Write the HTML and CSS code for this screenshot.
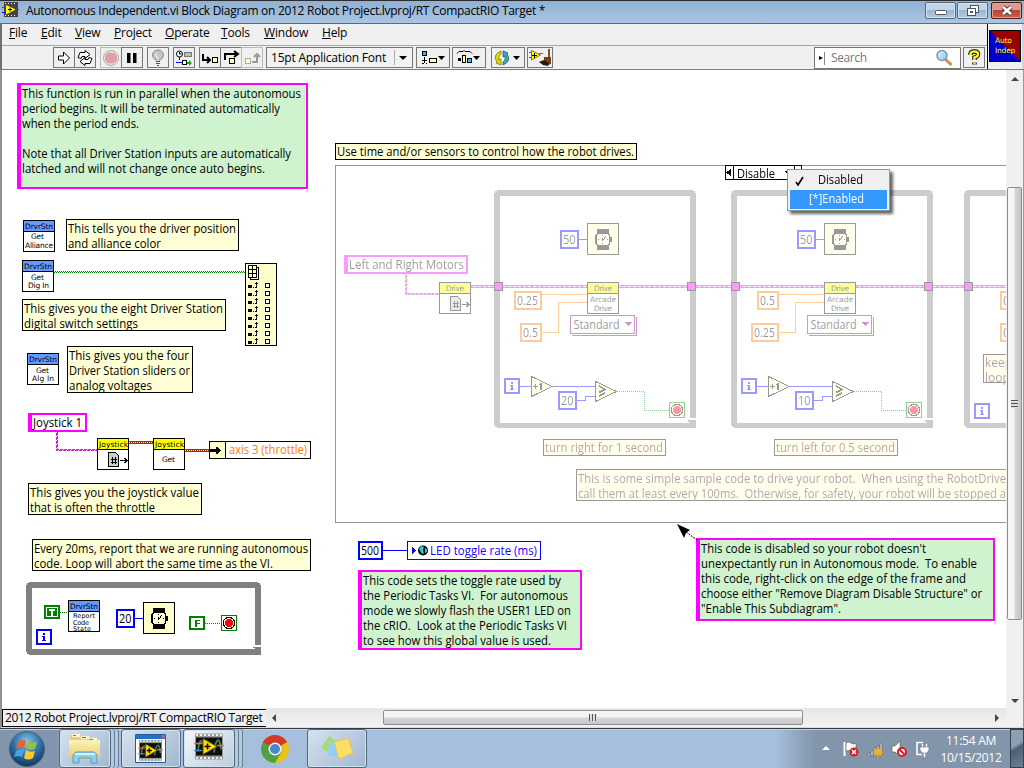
FILE: index.html
```html
<!DOCTYPE html>
<html lang="en">
<head>
<meta charset="utf-8">
<title>Autonomous Independent.vi Block Diagram</title>
<link rel="stylesheet" href="styles.css">
</head>
<body>
<svg class="defs" width="0" height="0">
  <defs>
    <pattern id="green-wire" width="2" height="2" patternUnits="userSpaceOnUse"><path d="M0 0h1v1h-1zM1 1h1v1h-1z" fill="#008000"/></pattern>
    <pattern id="pink-wire" width="4" height="4" patternUnits="userSpaceOnUse"><rect width="4" height="4" fill="#f0f"/><path d="M0 0h1v1h-1zM2 2h1v1h-1zM3 1h1v1h-1zM1 3h1v1h-1z" fill="#fff"/></pattern>
    <linearGradient id="lens" x2="1" y2="1"><stop stop-color="#e8f8ff"/><stop offset="1" stop-color="#7fc4ec"/></linearGradient>
    <radialGradient id="orb" cx=".5" cy=".3" r=".75"><stop stop-color="#8fc6e4"/><stop offset=".5" stop-color="#2f72a8"/><stop offset="1" stop-color="#0c2c50"/></radialGradient>
    <linearGradient id="folder" x2="0" y2="1"><stop stop-color="#fdf3b8"/><stop offset="1" stop-color="#e9c766"/></linearGradient>
    <symbol id="watch" viewBox="0 0 32 32"><rect x=".5" y=".5" width="31" height="31" fill="#ffc" stroke="#000"/><path d="M10 6h12v5h-12zM10 22h12v5h-12z"/><path d="M10 10h12v1h1v3h2v5h-2v3h-1v1h-12v-1h-1v-1h-1v-9h1v-1h1z"/><path d="M11 11h10v1h1v9h-1v1h-10v-1h-1v-9h1z" fill="#ffffd8"/><path d="M15 12h1v1h-1zM11 16h1v1h-1zM20 16h1v1h-1zM15 20h1v1h-1zM18 13h1v1h-1zM17 14h1v2h-1zM15 15h1v3h-1zM16 16h1v1h-1z"/></symbol>
    <symbol id="stop" viewBox="0 0 16 16"><rect x=".5" y=".5" width="15" height="15" fill="#ffffe0" stroke="#008000"/><circle cx="8" cy="8" r="5.700" fill="#fff" stroke="#000"/><circle cx="8" cy="8" r="4.300" fill="#f00"/></symbol>
    <symbol id="iter" viewBox="0 0 16 16"><rect x="1" y="1" width="14" height="14" fill="#fff" stroke="#00f" stroke-width="2"/><path d="M7 4h2v2h-2zM6 7h3v5h-2v-4h-1zM6 11h4v1h-4z" fill="#00f"/></symbol>
    <symbol id="page-ref" viewBox="0 0 20 16"><path d="M.5.5h7l3 3v11h-10z" fill="#ccc" stroke="#000"/><path d="M3 7.500h6M2.500 10.500h6M5 5.500l-1 7M8 5.500l-1 7" fill="none" stroke="#000"/><path d="M12 8.500h7M16.500 6l2.500 2.500l-2.500 2.500" fill="none" stroke="#000"/></symbol>
    <symbol id="loop" viewBox="0 0 203 239"><path d="M3 0h196v1h2v2h1v225h-6v-222h-190v227h190v-1h-2v-2h8v8h-199v-1h-2v-2h-1v-232h1v-2h2z" fill="#808080"/></symbol>
    <symbol id="lv" viewBox="0 0 30 28"><rect x="1" y="1" width="28" height="26" fill="#999"/><path d="M2 2.500h26M2 25.500h26" stroke="#eee" stroke-width="2" stroke-dasharray="2 2"/><rect x="2" y="5" width="26" height="18" fill="#0c0f0c"/><path d="M4 19c1-14 5-14 7 0M20 20c2-16 6-16 7-3" fill="none" stroke="#3f8a58" stroke-width="1.800"/><path d="M9 6l14 8l-14 8z" fill="#ffdf00" stroke="#5c4a00"/><path d="M10.500 14h6M13.500 11v6" stroke="#000" stroke-width="1.600"/><path d="M0 11h8M23 13h7" stroke="#e66" stroke-width="1.500"/><path d="M0 18h8" stroke="#48c" stroke-width="1.500"/></symbol>
    <g id="half">
      <path d="M579 239.500h8" stroke="#00f"/><rect x="561" y="231" width="17" height="17" fill="#fff" stroke="#00f" stroke-width="2"/><text class="t" x="563" y="244" textLength="12.500" lengthAdjust="spacingAndGlyphs">50</text>
      <use href="#watch" x="587" y="223" width="32" height="32"/>
      <path d="M542 294.500h45M542 332.500h16.500v-30h29" stroke="#ff8000" fill="none"/>
      <rect x="587.500" y="282.500" width="31" height="31" fill="#fff" stroke="#000"/><path d="M588 283h30v10h-30z" fill="#ff0"/><path d="M587 293.500h32" stroke="#000"/>
      <text class="p" x="594" y="291" textLength="18">Drive</text><text class="p" x="590" y="302" textLength="26">Arcade</text><text class="p" x="594" y="311" textLength="18">Drive</text>
      <path d="M572.500 334.500v1h64v-18h-1" fill="none" stroke="#800080"/><rect x="570.500" y="315.500" width="64" height="18" fill="#fff" stroke="#800080"/><text class="t" x="573.500" y="329" textLength="46" lengthAdjust="spacingAndGlyphs">Standard</text><path d="M625 322h7l-3.500 4z" fill="#800080"/>
      <path d="M520 386.500h11M552 386.500h43M577 400.500h8.500v-4h10" fill="none" stroke="#00f"/>
      <use href="#iter" x="504" y="378" width="16" height="16"/>
      <path d="M531.500 376.500v20l20.500-10z" fill="#ffc" stroke="#000"/><path d="M533 386h5v1h-5zM535 384h1v5h-1zM539 384h1v-1h2v7h-2v-5h-1z"/>
      <path d="M595.500 381.500v20l21-10z" fill="#ffc" stroke="#000"/><path d="M599 386l6 3.500l-6 3M599 396l6-3" fill="none" stroke="#000" stroke-width="1.500"/>
      <rect x="559" y="392" width="17" height="17" fill="#fff" stroke="#00f" stroke-width="2"/>
      <path d="M617 391.500h27.500v19h24.500" fill="none" stroke="#008000" stroke-dasharray="1 1"/>
      <use href="#stop" x="669" y="402" width="16" height="16"/>
    </g>
  </defs>
</svg>

<header class="titlebar">
  <svg class="app-icon" width="17" height="15" viewBox="0 0 17 15"><path d="M2 0h14v15h-14z" fill="#444"/><path d="M3 1h1v1h-1zM6 1h1v1h-1zM9 1h1v1h-1zM12 1h1v1h-1zM3 13h1v1h-1zM6 13h1v1h-1zM9 13h1v1h-1zM12 13h1v1h-1z" fill="#fff"/><path d="M4 3l10 4.500l-10 5z" fill="#ff0"/><path d="M6 7.500h4M8 5.500v4" stroke="#000"/><path d="M0 5.500h4M13 7.500h4" stroke="#f00"/><path d="M0 10.500h4" stroke="#00f"/></svg>
  <h1 class="title">Autonomous Independent.vi Block Diagram on 2012 Robot Project.lvproj/RT CompactRIO Target *</h1>
  <div class="win-buttons">
    <span class="wb"><svg width="29" height="15"><rect x="9.500" y="7.500" width="11" height="4" rx="1" fill="#fff" stroke="#4b5563"/></svg></span>
    <span class="wb"><svg width="29" height="15"><rect x="12.500" y="2.500" width="8" height="7" fill="#fff" stroke="#4b5563"/><rect x="9.500" y="5.500" width="8" height="7" fill="#fff" stroke="#4b5563"/><rect x="12" y="8" width="3" height="2" fill="#4b5563"/></svg></span>
    <span class="wb close"><svg width="29" height="15"><path d="M11 4l8 7M19 4l-8 7" stroke="#444" stroke-width="4.500"/><path d="M11 4l8 7M19 4l-8 7" stroke="#fff" stroke-width="2.500"/></svg></span>
  </div>
</header>

<div class="bars">
  <div class="bars-main">
    <nav class="menubar">
      <span class="m-file"><u>F</u>ile</span><span class="m-edit"><u>E</u>dit</span><span class="m-view"><u>V</u>iew</span><span class="m-project"><u>P</u>roject</span><span class="m-operate"><u>O</u>perate</span><span class="m-tools"><u>T</u>ools</span><span class="m-window"><u>W</u>indow</span><span class="m-help"><u>H</u>elp</span>
    </nav>
    <div class="toolbar">
      <div class="group g1">
        <span class="tb"><svg width="20" height="20"><path d="M4.500 8h5v-4l6 6l-6 6v-4h-5z" fill="#fff" stroke="#000"/></svg></span>
        <span class="tb"><svg width="20" height="20"><path d="M3 9.500l2-5h5v-2l5 4l-5 4v-2h-3l-1 2zM17 10.500l-2 5h-5v2l-5-4l5-4v2h3l1-2z" fill="#fff" stroke="#000"/></svg></span>
      </div>
      <div class="group">
        <span class="tb off"><svg width="20" height="20"><circle cx="10" cy="10" r="7.500" fill="#eee" stroke="#aaa"/><path d="M7 4.500h6l3 3v5l-3 3h-6l-3-3v-5z" fill="#dfa0a4"/></svg></span>
        <span class="tb"><svg width="20" height="20"><path d="M5 5h3.500v10h-3.500zM11 5h3.500v10h-3.500z"/></svg></span>
      </div>
      <span class="tb one"><svg width="20" height="20"><path d="M7.500 12q-3-2.500-3-5a5.500 5 0 0 1 11 0q0 2.500-3 5z" fill="#c4c4c4" stroke="#888"/><path d="M8 5v3l2 2v3" stroke="#fff" fill="none"/><path d="M8 13.500h4M8 15.500h4M9 17.500h2" stroke="#555"/></svg></span>
      <span class="tb one"><svg width="20" height="20"><circle cx="5.500" cy="6" r="3" fill="#fff" stroke="#000"/><path d="M5.500 4v2h2" stroke="#000" fill="none"/><rect x="10.500" y="4.500" width="7" height="4" fill="#bbb" stroke="#777"/><path d="M2 14.500h7" stroke="#00f"/><path d="M5.500 9v3" stroke="#000"/><rect x="8.500" y="12.500" width="4" height="4" fill="#ffc" stroke="#000"/><path d="M13 14h2v-2l3 3l-3 3v-2h-2z" fill="#0b0"/></svg></span>
      <div class="group">
        <span class="tb"><svg width="20" height="20"><path d="M3 6v6h6M7 9l3 3l-3 3" fill="none" stroke="#000" stroke-width="2"/><rect x="12.500" y="9.500" width="5" height="5" fill="#ffc" stroke="#000"/></svg></span>
        <span class="tb"><svg width="20" height="20"><path d="M4 12v-6h11M13 3l4 3l-4 3" fill="none" stroke="#000" stroke-width="2"/><rect x="8.500" y="10.500" width="5" height="5" fill="#ffc" stroke="#000"/></svg></span>
        <span class="tb off"><svg width="20" height="20"><rect x="3.500" y="10.500" width="5" height="5" fill="#ffd" stroke="#aaa"/><path d="M10 14h5v-6M12 9l3-3l3 3" fill="none" stroke="#999" stroke-width="2"/></svg></span>
      </div>
      <div class="fontbox"><span class="fontname">15pt Application Font</span><span class="drop"></span></div>
      <span class="tb wide a"><svg width="32" height="20"><rect x="5.500" y="3.500" width="4" height="4" fill="#0cf" stroke="#000"/><path d="M7.500 9v6M5 12.500h5M5 15.500h2M9 15.500h1" stroke="#000"/><rect x="12.500" y="10.500" width="7" height="4" fill="#ff9" stroke="#000"/><path d="M21 8h7l-3.500 4z"/></svg></span>
      <span class="tb wide b"><svg width="32" height="20"><path d="M4 5.500l2-2h4l1-1l1 1h5l2 2" fill="none" stroke="#000"/><path d="M5 10h3v3h-3z"/><rect x="9.500" y="7.500" width="3" height="7" fill="#ff9" stroke="#000"/><rect x="14.500" y="10.500" width="4" height="4" fill="#0cf" stroke="#000"/><path d="M20 8h7l-3.500 4z"/></svg></span>
      <span class="tb wide c"><svg width="32" height="20"><path d="M9 3v3q-3 1-2 6l2-1v6l-5-2l1-1q-5-7 4-11z" fill="#dfd700" stroke="#857c00" stroke-width=".8"/><path d="M11 17v-3q3-1 2-6l-2 1v-6l5 2l-1 1q5 7-4 11z" fill="#3aa6bd" stroke="#176174" stroke-width=".8"/><path d="M21 8h7l-3.500 4z"/></svg></span>
      <span class="tb clean"><svg width="24" height="20"><path d="M1 4.500h3M1 9.500h3" stroke="#06f"/><path d="M11 5.500h4" stroke="#f33"/><path d="M3.500 2.500l9 4.500l-9 5z" fill="#ff0" stroke="#a60"/><path d="M4 7.500h5M6.500 5v5" stroke="#000"/><path d="M20 1h2v9h-2z" fill="#87522a"/><path d="M16 9h7v7l-3 1l-9-3l5-1z" fill="#70431f"/><path d="M11 14l5-2l5 3l-1 3l-5-1z" fill="#2c1a0d"/></svg></span>
      <div class="search"><span class="search-tri"></span><span class="search-text">Search</span><svg width="18" height="18"><path d="M10.500 10.500l6 5.500" stroke="#d48a4c" stroke-width="3"/><circle cx="7" cy="6.500" r="5" fill="url(#lens)" stroke="#7797b5" stroke-width="1.500"/></svg></div>
      <span class="tb help"><svg width="20" height="20"><path d="M6.500 7v-1q0-2.500 4-2.500t3.500 3q0 2-3.500 3v2.500M10.500 14.500v2" fill="none" stroke="#000" stroke-width="4.400"/><path d="M6.500 7v-1q0-2.500 4-2.500t3.500 3q0 2-3.500 3v2.500M10.500 14.500v2" fill="none" stroke="#ffee1a" stroke-width="2.600"/></svg></span>
    </div>
  </div>
  <div class="vi-pane"><div class="vi-icon"><span>Auto</span><span>Indep</span></div></div>
</div>

<main class="work">
<svg class="diagram" width="1004" height="638" viewBox="2 70 1004 638">
  <g class="crisp">
    <!-- comment boxes -->
    <g fill="#cff3cf" stroke="#f0f" stroke-width="2">
      <rect x="18" y="84" width="289" height="104"/><rect x="697" y="539" width="297" height="81"/><rect x="359" y="571" width="222" height="78"/>
    </g>
    <path d="M17 83h4v106h-4zM696 538h4v83h-4zM358 570h4v80h-4z" fill="#f0f"/>
    <g fill="#ffffd5" stroke="#000">
      <rect x="66.500" y="219.500" width="172" height="31"/><rect x="22.500" y="299.500" width="203" height="31"/><rect x="67.500" y="346.500" width="125" height="46"/><rect x="28.500" y="483.500" width="173" height="31"/><rect x="32.500" y="539.500" width="278" height="31"/><rect x="335.500" y="143.500" width="301" height="16"/>
    </g>
    <!-- driver station nodes -->
    <g stroke="#000" fill="#fff">
      <rect x="23.500" y="220.500" width="31" height="31"/><rect x="22.500" y="260.500" width="31" height="31"/><rect x="27.500" y="353.500" width="31" height="31"/><rect x="68.500" y="600.500" width="31" height="31"/>
      <rect x="97.500" y="438.500" width="31" height="31"/><rect x="153.500" y="438.500" width="31" height="31"/>
    </g>
    <g stroke="#000" fill="#69f"><rect x="23.500" y="220.500" width="31" height="11"/><rect x="22.500" y="260.500" width="31" height="11"/><rect x="27.500" y="353.500" width="31" height="11"/><rect x="68.500" y="600.500" width="31" height="11"/></g>
    <g stroke="#000" fill="#ff0"><rect x="97.500" y="438.500" width="31" height="11"/><rect x="153.500" y="438.500" width="31" height="11"/></g>
    <rect x="54" y="271" width="191" height="2" fill="url(#green-wire)"/>
    <rect x="245.500" y="263.500" width="31" height="82" fill="#ffc" stroke="#000"/>
    <path d="M250.500 267.500h8v12h-8z" fill="#fff" stroke="#000"/><path d="M248.500 265.500h8v12h-8zM252.500 265v12M248 269.500h8M248 273.500h8" fill="#ffc" stroke="#000"/>
    <g id="array-rows"><g id="arow"><path d="M248 285h4v3h-4zM253 287h1v1h-1zM255 287h1v-3h-1v-1h1v-1h1v1h1v1h-1v4h-2z"/><rect x="265.500" y="283.500" width="4" height="4" fill="#fff" stroke="#000"/></g>
    <use href="#arow" y="8"/><use href="#arow" y="16"/><use href="#arow" y="24"/><use href="#arow" y="32"/><use href="#arow" y="40"/><use href="#arow" y="48"/><use href="#arow" y="56"/></g>
    <!-- joystick chain -->
    <path d="M56 432h2v18h-2zM56 449h41v2h-41z" fill="url(#pink-wire)"/>
    <rect x="29" y="414" width="57" height="17" fill="#fff" stroke="#f0f" stroke-width="2"/><path d="M28 413h4v19h-4z" fill="#f0f"/>
    <path d="M129 442.500h24M185 450.500h25" stroke="#930" stroke-width="3"/><path d="M129 442.500h24M185 450.500h25" stroke="#fff" stroke-dasharray="1 1"/>
    <rect x="209.500" y="441.500" width="101" height="17" fill="#fff" stroke="#000"/><rect x="209.500" y="441.500" width="16" height="17" fill="#ffc" stroke="#000"/>
    <path d="M209 449h7v-2h1l4 3l-4 4h-1v-2h-7z"/>
    <use href="#page-ref" x="108" y="452" width="20" height="16"/>
    <!-- reporting loop -->
    <path d="M29 582h229v1h2v2h1v60h-6v-57h-223v61h223v-1h-2v-1h8v8h-232v-1h-2v-2h-1v-67h1v-2h2z" fill="#808080"/>
    <rect x="45" y="606" width="14" height="12" fill="#fff" stroke="#008000" stroke-width="2"/><path d="M47 608h10v8h-10z" fill="#008000"/><path d="M49 609h6v2h-2v5h-2v-5h-2z" fill="#fff"/>
    <path d="M60 612.500h8M205 623.500h16" stroke="#008000" stroke-dasharray="1 1"/>
    <rect x="190" y="617" width="14" height="12" fill="#fff" stroke="#008000" stroke-width="2"/><path d="M195 620h5v1h-3v2h3v1h-3v3h-2z" fill="#008000"/>
    <use href="#iter" x="36" y="629" width="16" height="16"/>
    <path d="M135 618.500h8M383 550.500h24" stroke="#00f"/>
    <rect x="117" y="610" width="17" height="17" fill="#fff" stroke="#00f" stroke-width="2"/>
    <use href="#watch" x="143" y="602" width="32" height="32"/><use href="#stop" x="221" y="615" width="16" height="16"/>
    <rect x="359" y="542" width="23" height="17" fill="#fff" stroke="#00f" stroke-width="2"/><rect x="407.500" y="541.500" width="133" height="18" fill="#fff" stroke="#00f"/>
    <path d="M412 547v7l4-3.500z" fill="#00f"/>
  </g>
  <circle cx="423" cy="550.500" r="5" fill="#000"/><path d="M419 549l2-3l3 1l-1 3l1 3l-2 1zM425 548l2 1v3l-2 1z" fill="#29c5ea"/>
  <!-- labels inside nodes -->
  <g class="p">
    <text x="25" y="229" textLength="28">DrvrStn</text><text x="31" y="239" textLength="13">Get</text><text x="25" y="248" textLength="28">Alliance</text>
    <text x="24" y="269" textLength="28">DrvrStn</text><text x="31" y="280" textLength="13">Get</text><text x="28" y="288" textLength="21">Dig In</text>
    <text x="29" y="362" textLength="28">DrvrStn</text><text x="36" y="373" textLength="13">Get</text><text x="32" y="381" textLength="22">Alg In</text>
    <text x="70" y="609" textLength="28">DrvrStn</text>
    <g class="tight"><text x="73" y="618" textLength="22">Report</text><text x="73" y="625" textLength="16">Code</text><text x="73" y="631" textLength="18">State</text></g>
    <text x="99" y="447" textLength="29">Joystick</text><text x="155" y="447" textLength="29">Joystick</text><text x="162" y="462" textLength="13">Get</text>
  </g>
  <g class="t">
    <g transform="translate(0 1)">
    <text x="22" y="97" textLength="279" lengthAdjust="spacingAndGlyphs">This function is run in parallel when the autonomous</text>
    <text x="22" y="112" textLength="258" lengthAdjust="spacingAndGlyphs">period begins. It will be terminated automatically</text>
    <text x="22" y="127" textLength="117" lengthAdjust="spacingAndGlyphs">when the period ends.</text>
    <text x="22" y="157" textLength="269" lengthAdjust="spacingAndGlyphs">Note that all Driver Station inputs are automatically</text>
    <text x="22" y="172" textLength="243" lengthAdjust="spacingAndGlyphs">latched and will not change once auto begins.</text>
    <text x="68" y="232" textLength="168" lengthAdjust="spacingAndGlyphs">This tells you the driver position</text>
    <text x="68" y="247" textLength="93" lengthAdjust="spacingAndGlyphs">and alliance color</text>
    <text x="24" y="312" textLength="199" lengthAdjust="spacingAndGlyphs">This gives you the eight Driver Station</text>
    <text x="24" y="327" textLength="114" lengthAdjust="spacingAndGlyphs">digital switch settings</text>
    <text x="69" y="359" textLength="120" lengthAdjust="spacingAndGlyphs">This gives you the four</text>
    <text x="69" y="374" textLength="121" lengthAdjust="spacingAndGlyphs">Driver Station sliders or</text>
    <text x="69" y="389" textLength="83" lengthAdjust="spacingAndGlyphs">analog voltages</text>
    <text x="30" y="496" textLength="169" lengthAdjust="spacingAndGlyphs">This gives you the joystick value</text>
    <text x="30" y="511" textLength="125" lengthAdjust="spacingAndGlyphs">that is often the throttle</text>
    <text x="34" y="552" textLength="274" lengthAdjust="spacingAndGlyphs">Every 20ms, report that we are running autonomous</text>
    <text x="34" y="567" textLength="239" lengthAdjust="spacingAndGlyphs">code. Loop will abort the same time as the VI.</text>
    <text x="363" y="584" textLength="198" lengthAdjust="spacingAndGlyphs">This code sets the toggle rate used by</text>
    <text x="363" y="599" textLength="205" lengthAdjust="spacingAndGlyphs">the Periodic Tasks VI.&#160; For autonomous</text>
    <text x="363" y="614" textLength="208" lengthAdjust="spacingAndGlyphs">mode we slowly flash the USER1 LED on</text>
    <text x="363" y="629" textLength="204" lengthAdjust="spacingAndGlyphs">the cRIO.&#160; Look at the Periodic Tasks VI</text>
    <text x="363" y="644" textLength="188" lengthAdjust="spacingAndGlyphs">to see how this global value is used.</text>
    <text x="701" y="552" textLength="225" lengthAdjust="spacingAndGlyphs">This code is disabled so your robot doesn't</text>
    <text x="701" y="567" textLength="276" lengthAdjust="spacingAndGlyphs">unexpectantly run in Autonomous mode.&#160; To enable</text>
    <text x="701" y="582" textLength="265" lengthAdjust="spacingAndGlyphs">this code, right-click on the edge of the frame and</text>
    <text x="701" y="597" textLength="281" lengthAdjust="spacingAndGlyphs">choose either "Remove Diagram Disable Structure" or</text>
    <text x="701" y="612" textLength="140" lengthAdjust="spacingAndGlyphs">"Enable This Subdiagram".</text>
    </g>
    <text x="33" y="427" textLength="49" lengthAdjust="spacingAndGlyphs">Joystick 1</text>
    <text x="229" y="454" textLength="78" lengthAdjust="spacingAndGlyphs" fill="#ff8000">axis 3 (throttle)</text>
    <text x="119" y="623" textLength="12.500" lengthAdjust="spacingAndGlyphs">20</text>
    <text x="337" y="156" textLength="297" lengthAdjust="spacingAndGlyphs">Use time and/or sensors to control how the robot drives.</text>
    <text x="361" y="555" textLength="18" lengthAdjust="spacingAndGlyphs">500</text>
    <text x="430" y="555" textLength="107" lengthAdjust="spacingAndGlyphs" fill="#20f">LED toggle rate (ms)</text>
  </g>
  <path d="M677 524l13 6l-4 3l-2 5z"/><path d="M686 532l11 8" stroke="#000" stroke-dasharray="2 1"/>

  <!-- disabled subdiagram -->
  <g opacity=".4">
    <g class="crisp">
      <path d="M1010 165.500h-674.500v357h675" fill="none" stroke="#000"/>
      <path d="M471 286.500h540" stroke="#f0f" stroke-width="3"/><path d="M473 286.500h540" stroke="#fff" stroke-dasharray="3 2"/>
      <use href="#loop" x="494" y="190" width="203" height="239"/><use href="#loop" x="731" y="190" width="203" height="239"/><use href="#loop" x="964" y="190" width="203" height="239"/>
      <g fill="#f0f" stroke="#000"><rect x="494.500" y="282.500" width="8" height="8"/><rect x="687.500" y="282.500" width="8" height="8"/><rect x="731.500" y="282.500" width="8" height="8"/><rect x="924.500" y="282.500" width="8" height="8"/><rect x="964.500" y="282.500" width="8" height="8"/></g>
      <path d="M405 274h2v20h-2zM405 293h34v2h-34z" fill="url(#pink-wire)"/>
      <rect x="345" y="256" width="122" height="17" fill="#fff" stroke="#f0f" stroke-width="2"/><path d="M344 255h4v19h-4z" fill="#f0f"/>
      <rect x="439.500" y="282.500" width="31" height="31" fill="#fff" stroke="#000"/><path d="M440 283h30v10h-30z" fill="#ff0"/><path d="M439 293.500h32" stroke="#000"/>
      <use href="#page-ref" x="450" y="296" width="20" height="16"/>
      <use href="#half"/><use href="#half" x="237"/>
      <g fill="#fff" stroke="#ff8000" stroke-width="2"><rect x="515" y="292" width="26" height="17"/><rect x="521" y="324" width="20" height="17"/><rect x="758" y="292" width="20" height="17"/><rect x="752" y="324" width="26" height="17"/><rect x="1001" y="292" width="26" height="17"/><rect x="1001" y="324" width="26" height="17"/></g>
      <g fill="#ffc" stroke="#000"><rect x="543.500" y="439.500" width="122" height="16"/><rect x="774.500" y="439.500" width="123" height="16"/><rect x="576.500" y="469.500" width="480" height="31"/><rect x="983.500" y="354.500" width="60" height="28"/></g>
      <use href="#iter" x="974" y="403" width="16" height="16"/>
    </g>
    <text class="p" x="446" y="291" textLength="18">Drive</text>
    <g class="t">
      <text x="349" y="269" textLength="115" lengthAdjust="spacingAndGlyphs">Left and Right Motors</text>
      <text x="517" y="305" textLength="21" lengthAdjust="spacingAndGlyphs">0.25</text><text x="523" y="337" textLength="15" lengthAdjust="spacingAndGlyphs">0.5</text>
      <text x="760" y="305" textLength="15" lengthAdjust="spacingAndGlyphs">0.5</text><text x="754" y="337" textLength="21" lengthAdjust="spacingAndGlyphs">0.25</text>
      <text x="1003" y="305">0</text><text x="1003" y="337">0</text>
      <text x="561" y="405" textLength="12.500" lengthAdjust="spacingAndGlyphs">20</text><text x="798" y="405" textLength="12.500" lengthAdjust="spacingAndGlyphs">10</text>
    </g>
    <g class="t" fill="#46182f">
      <text x="985" y="367">keep</text><text x="985" y="382">loop</text>
      <text x="545" y="452" textLength="118" lengthAdjust="spacingAndGlyphs">turn right for 1 second</text>
      <text x="776" y="452" textLength="119" lengthAdjust="spacingAndGlyphs">turn left for 0.5 second</text>
      <text x="578" y="483" textLength="428" lengthAdjust="spacingAndGlyphs">This is some simple sample code to drive your robot.&#160; When using the RobotDrive</text>
      <text x="578" y="498" textLength="428" lengthAdjust="spacingAndGlyphs">call them at least every 100ms.&#160; Otherwise, for safety, your robot will be stopped a</text>
    </g>
  </g>

  <!-- case selector and its menu -->
  <g class="crisp"><rect x="725.500" y="165.500" width="76" height="14" fill="#fff" stroke="#000"/><path d="M733.500 165v15M794.500 165v15" stroke="#000"/><path d="M731 169v7l-5-3.500zM784 171h7l-3 4z"/></g>
  <text class="t" x="737" y="178" textLength="38" lengthAdjust="spacingAndGlyphs">Disable</text>
  <g class="menu">
    <rect x="787.500" y="169.500" width="102" height="41" fill="#f0f0f0" stroke="#979797"/>
    <rect x="790" y="190" width="97" height="19" fill="#39f"/>
    <path d="M796 182l2 3l5-8" fill="none" stroke="#000" stroke-width="1.600"/>
    <text class="t" x="818" y="184" textLength="45" lengthAdjust="spacingAndGlyphs">Disabled</text>
    <text class="t" x="809" y="203" textLength="55" lengthAdjust="spacingAndGlyphs" fill="#fff">[*]Enabled</text>
  </g>
</svg>
<div class="vscroll"><i class="arrow up"></i><div class="vthumb"><i class="grip"></i></div><i class="arrow down"></i></div>
</main>

<footer class="bottom">
  <div class="target">2012 Robot Project.lvproj/RT CompactRIO Target</div>
  <div class="hscroll"><i class="arrow left"></i><div class="hthumb"><i class="grip v"></i></div><i class="arrow right"></i></div>
  <div class="corner"></div>
</footer>

<div class="taskbar">
  <svg class="start" width="36" height="36" viewBox="0 0 36 36"><circle cx="18" cy="18" r="17.500" fill="url(#orb)" stroke="#4a6178"/><path d="M9 11q5-3 8-1l-2 7q-4-2-8 1z" fill="#e8632c"/><path d="M19 10q4 3 9 0l-2 8q-5 2-9-1z" fill="#8fc43c"/><path d="M7 20q4-3 8-1l-2 7q-4-2-8 0z" fill="#4aa3e0"/><path d="M17 19q4 3 9 1l-2 7q-5 3-9 0z" fill="#fbc92f"/></svg>
  <div class="task explorer"><svg width="36" height="32" viewBox="0 0 36 32"><path d="M3 4l2-3h8l2 3h14l3 3v20h-29z" fill="#e9cf7a"/><path d="M5 1h8v3h-8zM14 3h8v3h-8zM22 5h8v3h-8z" fill="#fff8d0"/><path d="M6 2h3v1h-3z" fill="#2b3"/><path d="M15 4h4v1h-4z" fill="#e33"/><path d="M22 6h4v1h-4z" fill="#39f"/><path d="M2 7h31v20h-31z" fill="url(#folder)"/><path d="M6 30v-8l3-3h18l3 3v8h-6v-5h-12v5z" fill="#8fcdec" stroke="#4f9dcb"/><path d="M8 21h20" stroke="#d8f3ff" stroke-width="2"/></svg></div>
  <div class="task proj"><svg width="32" height="30" viewBox="0 0 32 30"><path d="M.5.500h30v28h-30z" fill="#fff" stroke="#245a9b"/><path d="M1 1h29v4h-29z" fill="#2372c8"/><path d="M27 1h3v3h-3z" fill="#e55"/><use href="#lv" x="3" y="5" width="25" height="23"/></svg></div>
  <div class="task lvtask"><svg width="32" height="32"><use href="#lv" x="1" y="1" width="30" height="29"/></svg></div>
  <div class="chrome"><svg width="30" height="30" viewBox="0 0 30 30"><circle cx="15" cy="15" r="14" fill="#e8c21b"/><path d="M15 15L2.900 8A14 14 0 0 1 27.100 8z" fill="#d3382c"/><path d="M2.900 8A14 14 0 0 0 15 29l6-10.500l-12 0z" fill="#4aa447"/><path d="M2.900 8L9 18.500l6-10h12A14 14 0 0 0 2.900 8z" fill="#d3382c"/><path d="M2.900 8L9.300 18.500h4l-2-6z" fill="#4aa447"/><circle cx="15" cy="15" r="6.500" fill="#f2f2f2"/><circle cx="15" cy="15" r="5" fill="#4a87c7"/></svg></div>
  <div class="task notes"><svg width="34" height="28" viewBox="0 0 34 28"><path d="M9 1l8 6l-7 11l-9-5z" fill="#a8dc70"/><path d="M9 6h11v15h-12z" fill="#93d1f4"/><path d="M14 7l14-4l5 15l-14 6z" fill="#fbdf62" stroke="#e2b83a" stroke-width=".6"/></svg></div>
  <div class="tray">
    <svg width="112" height="20" viewBox="0 0 112 20"><path d="M0 11h8l-4-4z" fill="#fff"/>
      <path d="M22.500 3v14" stroke="#fff" stroke-width="2"/><path d="M24 4q3-2 5 0t5 0v8q-3 1-5 0t-5 0z" fill="#fff" stroke="#555" stroke-width=".6"/><circle cx="32" cy="13" r="4.500" fill="#d91e22"/><path d="M30 11l4 4M34 11l-4 4" stroke="#fff" stroke-width="1.500"/>
      <path d="M46 14h2v3h-2zM49 12h2v5h-2zM52 9h2v8h-2zM55 7h2v10h-2zM58 4h2v13h-2z" fill="#c8ced6" stroke="#555" stroke-width=".5"/><circle cx="56" cy="13" r="3.500" fill="#f5a40c"/><path d="M56 8v10M51 13h10M52.500 9.500l7 7M59.500 9.500l-7 7" stroke="#f7b42a"/>
      <path d="M70 7h3l5-5v15l-5-4h-3z" fill="#fff" stroke="#555" stroke-width=".6"/><circle cx="80" cy="13" r="4" fill="#fff" stroke="#dd1d20" stroke-width="2"/><path d="M77.500 10.500l5 5" stroke="#dd1d20" stroke-width="2"/>
      <path d="M101 3.500h-6v12h5" fill="none" stroke="#fff" stroke-width="1.600"/><path d="M100.500 5v4M104.500 5v4" stroke="#fff" stroke-width="1.400"/><path d="M98 8h9v3l-2 3h-5l-2-3z" fill="#fff" stroke="#555" stroke-width=".5"/><path d="M102.500 14v4" stroke="#fff" stroke-width="1.500"/></svg>
    <div class="clock"><span>11:54 AM</span><span class="date">10/15/2012</span></div>
  </div>
  <div class="peek"></div>
</div>
</body>
</html>
```
FILE: styles.css
```css
* { box-sizing: border-box; }
body { margin: 0; width: 1024px; height: 768px; overflow: hidden; display: flex; flex-direction: column; background: #fff; font: 12px "Open Sans", "Noto Sans", sans-serif; color: #000; }
svg { display: block; flex: none; }
.defs { position: absolute; }
.t { font: 12px "Open Sans", "Noto Sans", sans-serif; }
.p { font: 7.5px "DejaVu Sans", sans-serif; }
.tight { font-size: 6.5px; }
.crisp { shape-rendering: crispEdges; }

.titlebar { height: 23px; flex: none; display: flex; align-items: flex-start; padding-left: 2px; border-top: 1px solid #2d2d30; background: linear-gradient(#91b0d2, #a9c6e3); }
.app-icon { margin-top: 1px; }
.title { margin: 0 0 0 7px; font-size: 12px; font-weight: 400; line-height: 20px; letter-spacing: -0.29px; white-space: nowrap; }
.win-buttons { margin-left: auto; display: flex; padding: 1px 2px 0 0; }
.wb { width: 31px; height: 17px; margin-right: 1px; border: 1px solid #56687f; border-radius: 2px; box-shadow: inset 0 0 0 1px #d2e0ef; background: linear-gradient(#c3d4e6 45%, #9db5d0 50%, #b4cbe2); }
.close { margin: 0 0 0 2px; border-color: #4f1c1b; box-shadow: inset 0 0 0 1px #e3a195; background: linear-gradient(#dc9a8c 45%, #bd4436 50%, #c8624c); }

.bars { height: 47px; flex: none; display: flex; border-top: 1px solid #686868; border-bottom: 1px solid #7c7c7c; border-left: 2px solid #707070; background: #f0f0f0; }
.bars-main { flex: 1; }
.menubar { height: 22px; display: flex; padding-left: 7px; line-height: 18px; border-bottom: 1px solid #a5a5a5; }
.menubar span { white-space: nowrap; letter-spacing: -0.2px; }
.m-file { width: 32px; } .m-edit { width: 34px; } .m-view { width: 39px; } .m-project { width: 51px; } .m-operate { width: 56px; } .m-tools { width: 43px; } .m-window { width: 58px; }
.toolbar { height: 23px; display: flex; padding: 1px 2px 0 51px; }
.group { display: flex; margin-right: 4px; }
.tb { width: 22px; height: 21px; border: 1px solid #777; background: #f0f0f0; flex: none; overflow: hidden; }
.group .tb + .tb { margin-left: -1px; }
.off { border-color: #bbb; }
.one { margin-right: 4px; }
.fontbox { width: 147px; height: 21px; display: flex; align-items: center; justify-content: space-between; margin-left: -1px; border: 1px solid #777; padding-left: 4px; background: #f2f2f2; white-space: nowrap; }
.fontname { line-height: 18px; letter-spacing: -0.2px; }
.drop { width: 18px; height: 15px; border-left: 1px solid #aaa; }
.drop::before { content: ""; display: block; width: 0; margin: 6px 0 0 4px; border: 4px solid transparent; border-top-color: #000; border-bottom: 0; }
.wide { width: 34px; margin-left: 3px; }
.b { margin-left: 2px; } .c { margin-left: 5px; }
.clean { width: 26px; margin-left: 2px; }
.search { width: 147px; margin-left: auto; display: flex; align-items: center; border: 1px solid #777; background: #fff; }
.search-tri { width: 10px; height: 13px; border-right: 1px solid #888; }
.search-tri::before { content: ""; display: block; width: 0; margin: 4px 0 0 4px; border: 2.5px solid transparent; border-left: 4px solid #000; border-right: 0; }
.search-text { flex: 1; padding-left: 6px; color: #777; line-height: 18px; letter-spacing: -0.4px; }
.search svg { margin-right: 7px; }
.help { margin-left: 2px; }
.vi-pane { width: 37px; border-left: 1px solid #000; border-right: 2px solid #c8d4e0; padding: 6px 0 0 1px; }
.vi-icon { width: 32px; height: 32px; border: 1px solid #000; padding: 5px 0 0 5px; background: linear-gradient(45deg, #00c 50%, #900 50%); color: #ff0; font: 7.5px/10px "DejaVu Sans", sans-serif; letter-spacing: -0.2px; display: flex; flex-direction: column; }

.work { height: 638px; flex: none; display: flex; border-left: 2px solid #909090; border-right: 1px solid #999; }
.menu > rect:first-child { filter: drop-shadow(3px 3px 1.5px #0009); }
.vscroll { width: 17px; display: flex; flex-direction: column; align-items: center; background: #f0f0f0; }
.arrow { width: 0; height: 0; border: 4px solid transparent; flex: none; }
.up { border-top: 0; border-bottom-color: #444; margin-top: 7px; }
.down { border-bottom: 0; border-top-color: #444; margin: auto 0 5px; }
.vthumb { width: 15px; height: 433px; margin-top: 106px; display: flex; align-items: center; justify-content: center; border: 1px solid #8f8f8f; border-radius: 2px; background: linear-gradient(90deg, #f6f6f6 45%, #d6d6d9 55%, #c4c4ca); }
.grip { width: 7px; height: 8px; background: repeating-linear-gradient(#555 0 1px, #ddd 1px 3px); }
.grip.v { width: 8px; height: 7px; background: repeating-linear-gradient(90deg, #555 0 1px, #ddd 1px 3px); }

.bottom { height: 20px; flex: none; display: flex; border-left: 2px solid #909090; border-right: 1px solid #999; border-bottom: 1px solid #ddd; background: #f0f0f0; }
.target { width: 264px; height: 18px; margin-top: 1px; padding-left: 2px; border: 1px solid #000; border-right: 0; line-height: 15px; letter-spacing: -0.3px; white-space: nowrap; }
.hscroll { width: 740px; display: flex; align-items: center; background: linear-gradient(#e6e6e6, #f3f3f3); }
.left { border-left: 0; border-right-color: #444; margin-left: 6px; }
.right { border-right: 0; border-left-color: #444; margin: 0 7px 0 auto; }
.hthumb { width: 420px; height: 15px; margin-left: 107px; display: flex; align-items: center; justify-content: center; border: 1px solid #8f8f8f; border-radius: 2px; background: linear-gradient(#f4f4f4 45%, #d4d4d6 55%, #c8c8cb); }
.corner { flex: 1; }

.taskbar { height: 40px; flex: none; display: flex; align-items: stretch; border-top: 1px solid #333b45; background: linear-gradient(90deg, #8295ac 0 57px, #a5bfdd 70px 775px, #8295ab 815px); box-shadow: inset 0 1px #c4d2e2; }
.start { margin: 2px 14px 0 9px; }
.task { display: flex; align-items: center; justify-content: center; border: 1px solid #51657d; border-radius: 3px; box-shadow: inset 0 0 0 1px #d3e0ee; background: linear-gradient(135deg, #d5e1ef, #a2b8d0); }
.explorer { width: 52px; margin-right: 10px; }
.explorer, .lvtask { box-shadow: inset 0 0 0 1px #d3e0ee, 3px 0 #b5c9df, 4px 0 #667b94, 7px 0 #b5c9df, 8px 0 #667b94; }
.proj { width: 60px; margin-right: 2px; }
.lvtask { width: 52px; background: linear-gradient(135deg, #f3f7fb, #bdcddd); }
.lvtask svg { margin-top: -3px; }
.chrome { width: 72px; display: flex; align-items: center; justify-content: center; padding-left: 8px; }
.notes { width: 60px; }
.tray { display: flex; align-items: center; margin-left: auto; color: #fff; }
.clock { width: 74px; margin-right: 2px; display: flex; flex-direction: column; align-items: center; line-height: 17px; padding-top: 1px; letter-spacing: -0.25px; }
.peek { width: 14px; border: 1px solid #334150; background: linear-gradient(150deg, #8fa0b2 40%, #4d5f73 50%, #6b8096); }
```
